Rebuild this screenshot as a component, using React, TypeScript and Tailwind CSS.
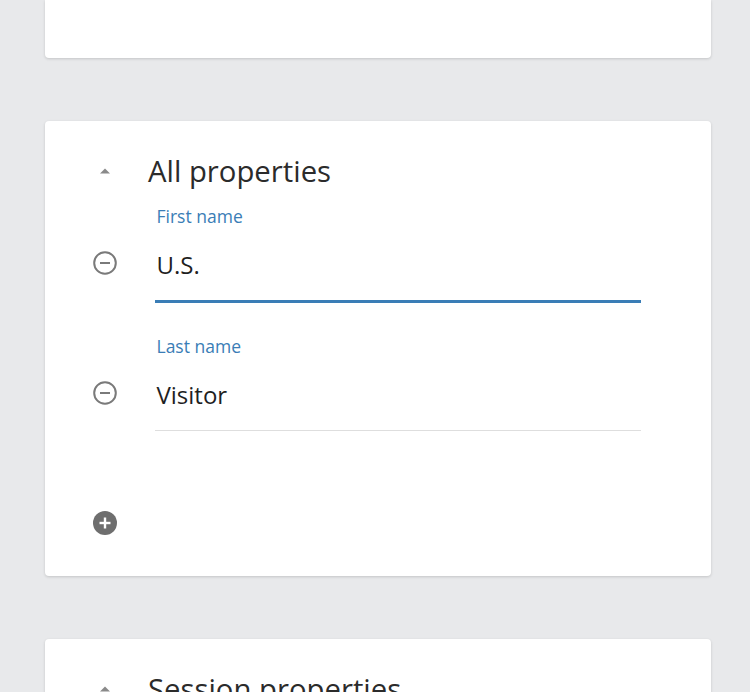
import React from 'react'

const font = { fontFamily: '"Open Sans", Lato, sans-serif' }

function ArrowUp() {
  return (
    <svg width="26" height="26" viewBox="0 0 26 26">
      <path d="M8 15.5 L13 10.5 L18 15.5 Z" fill="#8a8a8a" />
    </svg>
  )
}

function MinusCircle() {
  return (
    <svg width="26" height="26" viewBox="0 0 26 26">
      <circle cx="13" cy="13" r="10.8" fill="none" stroke="#7a7a7a" strokeWidth="2" />
      <line x1="8" y1="13" x2="18" y2="13" stroke="#7a7a7a" strokeWidth="2" />
    </svg>
  )
}

function PlusCircle() {
  return (
    <svg width="26" height="26" viewBox="0 0 26 26">
      <circle cx="13" cy="13" r="12" fill="#6e6e6e" />
      <line x1="7.5" y1="13" x2="18.5" y2="13" stroke="#fff" strokeWidth="2.4" />
      <line x1="13" y1="7.5" x2="13" y2="18.5" stroke="#fff" strokeWidth="2.4" />
    </svg>
  )
}

function Field({ label, value, focused }: { label: string; value: string; focused?: boolean }) {
  return (
    <div className="flex">
      <div className="w-[26px] shrink-0 pt-[44px]">
        <MinusCircle />
      </div>
      <div className="ml-[37px] w-[486px]">
        <div className="h-[20px] pl-[1.5px] text-[17.5px] leading-[20px] text-[#3a7db6]">{label}</div>
        <div className="mt-[23px] h-[32px] pl-[1.5px] text-[24px] leading-[32px] text-[#1f1f1f]">{value}</div>
        <div className="mt-[19px] h-[2px]">
          {focused ? (
            <div className="h-[2.5px] bg-[#3a7db6]" />
          ) : (
            <div className="h-[1px] bg-[#dedede]" />
          )}
        </div>
      </div>
    </div>
  )
}

function Header({ title }: { title: string }) {
  return (
    <div className="flex items-center h-[40px]">
      <div className="w-[26px] shrink-0">
        <ArrowUp />
      </div>
      <div className="ml-[30px] text-[29.3px] leading-[40px] text-[#2b2b2b]">{title}</div>
    </div>
  )
}

export default function App() {
  return (
    <div className="h-[692px] overflow-hidden bg-[#e8e9eb]" style={font}>
      <div className="ml-[45px] w-[666px]">
        <div className="h-[58px] rounded-b-[4px] bg-white shadow-[0_1px_3px_rgba(0,0,0,0.16)]" />

        <div className="mt-[63px] h-[455px] rounded-[4px] bg-white pl-[47px] pt-[30px] shadow-[0_1px_3px_rgba(0,0,0,0.16)]">
          <Header title="All properties" />
          <div className="mt-[15px]">
            <Field label="First name" value="U.S." focused />
          </div>
          <div className="mt-[34px]">
            <Field label="Last name" value="Visitor" />
          </div>
          <div className="mt-[78px]">
            <PlusCircle />
          </div>
        </div>

        <div className="mt-[63px] h-[200px] rounded-[4px] bg-white pl-[47px] pt-[30px] shadow-[0_1px_3px_rgba(0,0,0,0.16)]">
          <Header title="Session properties" />
        </div>
      </div>
    </div>
  )
}
